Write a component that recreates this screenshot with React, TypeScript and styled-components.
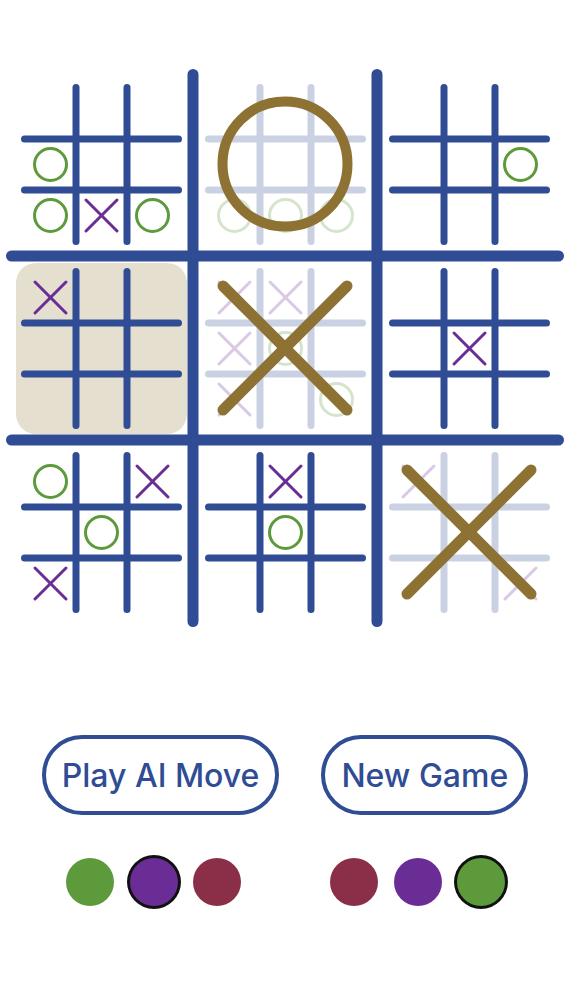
import React from "react";
import styled, { createGlobalStyle } from "styled-components";

const BLUE = "#2f4c94";
const GREEN = "#5c9a3b";
const PURPLE = "#6a2c95";
const RED = "#8b2f48";
const GOLD = "#8d7233";
const BEIGE = "#e5dfd0";

const GlobalStyle = createGlobalStyle`
  html, body {
    margin: 0;
    padding: 0;
    background: #ffffff;
    font-family: Inter, "Noto Sans", "Liberation Sans", sans-serif;
  }
`;

const Page = styled.main`
  display: flex;
  flex-direction: column;
  align-items: center;
  padding-top: 72px;
  min-height: 1001px;
  box-sizing: border-box;
`;

const Board = styled.div`
  position: relative;
  display: grid;
  grid-template-columns: repeat(3, 184px);
  grid-template-rows: repeat(3, 184px);
  width: 552px;
  height: 552px;
`;

const Cell = styled.div`
  position: relative;
  display: grid;
  place-items: center;
`;

const Pad = styled.div<{ $highlight?: boolean }>`
  display: grid;
  place-items: center;
  padding: 5px;
  border-radius: 20px;
  background: ${(p) => (p.$highlight ? BEIGE : "transparent")};
`;

const SmallSvg = styled.svg<{ $faded?: boolean }>`
  display: block;
  width: 161px;
  height: 161px;
  opacity: ${(p) => (p.$faded ? 0.25 : 1)};
`;

const BigMarkSvg = styled.svg`
  position: absolute;
  inset: 0;
  width: 184px;
  height: 184px;
  pointer-events: none;
`;

const LinesSvg = styled.svg`
  position: absolute;
  left: -3px;
  top: -3px;
  width: 558px;
  height: 558px;
  pointer-events: none;
`;

const Controls = styled.div`
  display: grid;
  grid-template-columns: auto auto;
  column-gap: 42px;
  row-gap: 43px;
  justify-content: center;
  justify-items: center;
  margin-top: 111px;
`;

const Button = styled.button`
  height: 80px;
  padding: 0 16px;
  border: 4px solid ${BLUE};
  border-radius: 40px;
  background: #fff;
  color: ${BLUE};
  font-family: Inter, "Noto Sans", "Liberation Sans", sans-serif;
  font-size: 32px;
  font-weight: 500;
  cursor: pointer;
`;

const Dots = styled.div`
  display: flex;
  gap: 15.5px;
  padding-right: 14px;
`;

const Dot = styled.div<{ $color: string; $selected?: boolean }>`
  width: 48px;
  height: 48px;
  border-radius: 50%;
  background: ${(p) => p.$color};
  box-shadow: ${(p) => (p.$selected ? "0 0 0 3px #111" : "none")};
`;

type Mark = "X" | "O" | ".";

const OffSets = [29.5, 80.5, 131.5];

function SmallMark({ m, cx, cy }: { m: Mark; cx: number; cy: number }) {
  if (m === "O") {
    return <circle cx={cx} cy={cy} r={16} fill="none" stroke={GREEN} strokeWidth={3} />;
  }
  if (m === "X") {
    const d = 15.5;
    return (
      <g stroke={PURPLE} strokeWidth={3} strokeLinecap="round">
        <line x1={cx - d} y1={cy - d} x2={cx + d} y2={cy + d} />
        <line x1={cx + d} y1={cy - d} x2={cx - d} y2={cy + d} />
      </g>
    );
  }
  return null;
}

function SmallBoard({ marks, faded }: { marks: string; faded?: boolean }) {
  return (
    <SmallSvg viewBox="0 0 161 161" $faded={faded}>
      <g stroke={BLUE} strokeWidth={7} strokeLinecap="round">
        <line x1={55} y1={3.5} x2={55} y2={157.5} />
        <line x1={106} y1={3.5} x2={106} y2={157.5} />
        <line x1={3.5} y1={55} x2={157.5} y2={55} />
        <line x1={3.5} y1={106} x2={157.5} y2={106} />
      </g>
      {marks.split("").map((m, i) => (
        <SmallMark key={i} m={m as Mark} cx={OffSets[i % 3]} cy={OffSets[Math.floor(i / 3)]} />
      ))}
    </SmallSvg>
  );
}

function BigMark({ winner }: { winner: "X" | "O" }) {
  return (
    <BigMarkSvg viewBox="0 0 184 184">
      {winner === "O" ? (
        <circle cx={92} cy={92} r={62.5} fill="none" stroke={GOLD} strokeWidth={10} />
      ) : (
        <g stroke={GOLD} strokeWidth={11} strokeLinecap="round">
          <line x1={30} y1={30} x2={154} y2={154} />
          <line x1={154} y1={30} x2={30} y2={154} />
        </g>
      )}
    </BigMarkSvg>
  );
}

type CellData = { marks: string; winner?: "X" | "O"; highlight?: boolean };

const cells: CellData[] = [
  { marks: "...O..OXO" },
  { marks: "......OOO", winner: "O" },
  { marks: ".....O..." },
  { marks: "X........", highlight: true },
  { marks: "XX.XO.X.O", winner: "X" },
  { marks: "....X...." },
  { marks: "O.X.O.X.." },
  { marks: ".X..O...." },
  { marks: "X.......X", winner: "X" },
];

export default function App() {
  return (
    <>
      <GlobalStyle />
      <Page>
        <Board>
          {cells.map((c, i) => (
            <Cell key={i}>
              <Pad $highlight={c.highlight}>
                <SmallBoard marks={c.marks} faded={!!c.winner} />
              </Pad>
              {c.winner && <BigMark winner={c.winner} />}
            </Cell>
          ))}
          <LinesSvg viewBox="0 0 558 558">
            <g stroke={BLUE} strokeWidth={11} strokeLinecap="round">
              <line x1={187} y1={5.5} x2={187} y2={552.5} />
              <line x1={371} y1={5.5} x2={371} y2={552.5} />
              <line x1={5.5} y1={187} x2={552.5} y2={187} />
              <line x1={5.5} y1={371} x2={552.5} y2={371} />
            </g>
          </LinesSvg>
        </Board>
        <Controls>
          <Button>Play AI Move</Button>
          <Button>New Game</Button>
          <Dots>
            <Dot $color={GREEN} />
            <Dot $color={PURPLE} $selected />
            <Dot $color={RED} />
          </Dots>
          <Dots>
            <Dot $color={RED} />
            <Dot $color={PURPLE} />
            <Dot $color={GREEN} $selected />
          </Dots>
        </Controls>
      </Page>
    </>
  );
}
